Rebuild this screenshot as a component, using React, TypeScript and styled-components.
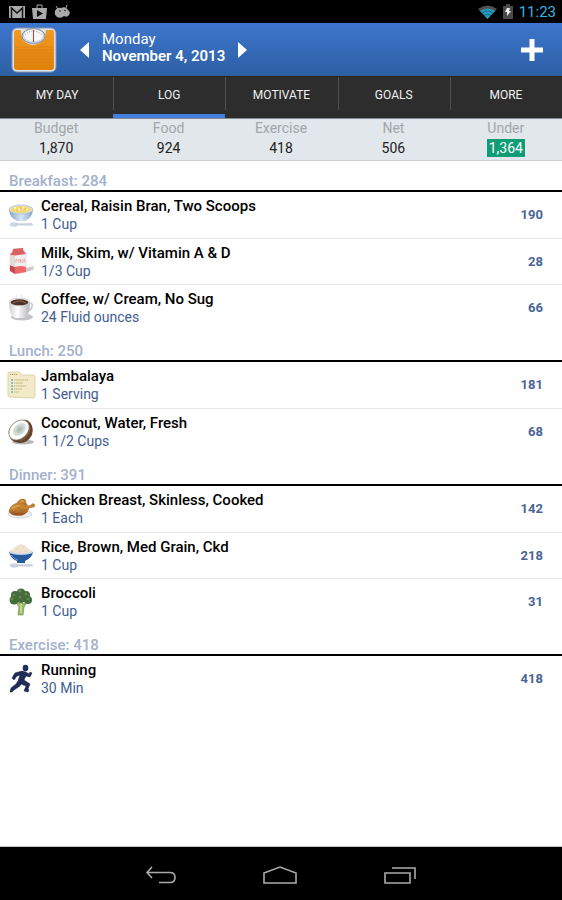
import React, { ReactNode } from 'react';
import styled, { createGlobalStyle } from 'styled-components';

const GlobalStyle = createGlobalStyle`
  * { box-sizing: border-box; }
  body { margin: 0; background: #fff; font-family: Roboto, "Noto Sans", sans-serif; }
  button { font: inherit; color: inherit; background: none; border: 0; padding: 0; cursor: pointer; }
  svg { display: block; flex: none; }
`;

const Screen = styled.div`
  display: flex;
  flex-direction: column;
  min-height: 100vh;
`;

const StatusBar = styled.div`
  display: flex;
  align-items: center;
  justify-content: space-between;
  height: 23px;
  padding: 0 6px 0 9px;
  background: #000;
`;

const StatusGroup = styled.div<{ $gap: number }>`
  display: flex;
  align-items: center;
  gap: ${(p) => p.$gap}px;
`;

const Clock = styled.time`
  color: #33b5e5;
  font-size: 15px;
  line-height: 24px;
`;

const Header = styled.header`
  display: flex;
  align-items: center;
  height: 53px;
  padding: 0 19px 0 11px;
  color: #fff;
  background: linear-gradient(#3c76cd, #2d5fa3);
`;

const DatePicker = styled.div`
  display: flex;
  align-items: center;
  flex: 1;
  gap: 13px;
  margin-left: 23px;
`;

const DateText = styled.h1`
  display: flex;
  flex-direction: column;
  margin: 0 0 4px;
  font-size: 15px;
  line-height: 17px;
  font-weight: 600;
`;

const Weekday = styled.span`
  font-weight: 400;
`;

const Tabs = styled.nav`
  display: grid;
  grid-template-columns: repeat(5, 1fr);
  height: 42px;
  padding-left: 1px;
  background: #2d2d2d;
  border-top: 1px solid #2b2710;
`;

const Tab = styled.button<{ $active?: boolean }>`
  display: flex;
  justify-content: center;
  padding-top: 10px;
  color: #f0f0f0;
  font-size: 12px;
  line-height: 16px;
  border-bottom: 4px solid ${(p) => (p.$active ? '#4080de' : 'transparent')};
  background: linear-gradient(#505050, #505050) left top / 1px 33px no-repeat;
  &:first-child { background: none; }
`;

const Summary = styled.dl`
  display: grid;
  grid-template-columns: repeat(5, 1fr);
  height: 43px;
  margin: 0;
  text-align: center;
  font-size: 14px;
  background: #e2e7eb;
  border-top: 1px solid #85878a;
  border-bottom: 1px solid #c9cccf;
`;

const SummaryLabel = styled.dt`
  color: #a3a6a9;
  line-height: 18px;
`;

const SummaryValue = styled.dd<{ $good?: boolean }>`
  width: fit-content;
  margin: 2px auto 0;
  padding: 0 2px;
  line-height: 18px;
  color: ${(p) => (p.$good ? '#fff' : '#222')};
  background: ${(p) => (p.$good ? '#0f9d76' : 'transparent')};
`;

const Log = styled.main`
  flex: 1;
`;

const MealTitle = styled.h2`
  height: 31px;
  margin: 0;
  padding: 10px 9px 0;
  color: #a3b1cc;
  font-size: 15px;
  line-height: 20px;
  font-weight: 500;
  border-bottom: 2px solid #000;
`;

const Entries = styled.ul`
  margin: 0;
  padding: 0;
  list-style: none;
`;

const Entry = styled.li`
  display: flex;
  align-items: center;
  height: 46px;
  padding: 0 19px 0 6px;
  gap: 5px;
  border-bottom: 1px solid #e6e6e6;
  &:first-child { height: 47px; }
  &:last-child { border-bottom-color: transparent; }
`;

const EntryText = styled.div`
  flex: 1;
  padding-top: 1px;
`;

const EntryName = styled.div`
  color: #000;
  font-size: 15px;
  line-height: 18px;
  font-weight: 500;
`;

const EntryAmount = styled.div`
  color: #3f5d8f;
  font-size: 14px;
  line-height: 19px;
`;

const Calories = styled.div`
  color: #4a6496;
  font-size: 13px;
  line-height: 18px;
  font-weight: 700;
`;

const SystemBar = styled.footer`
  display: flex;
  align-items: center;
  justify-content: center;
  gap: 85px;
  height: 54px;
  padding-top: 2px;
  background: #000;
  border-top: 1px solid #c4c4c4;
`;

const FoodSvg = ({ children }: { children: ReactNode }) => (
  <svg width="30" height="30" viewBox="0 0 30 30" aria-hidden="true">{children}</svg>
);

const Spoon = () => (
  <g fill="#cfd8e5" stroke="#a7b4c6" strokeWidth=".4">
    <ellipse cx="8" cy="24.500" rx="4" ry="1.8" />
    <path d="M11 23.800 26 23.500 27 24.500 25 25.300 11 25Z" />
  </g>
);

const CerealIcon = () => (
  <FoodSvg>
    <defs><linearGradient id="bowl" x2="1"><stop stopColor="#7f9fc2" /><stop offset=".5" stopColor="#d8e7f4" /><stop offset="1" stopColor="#86a5c6" /></linearGradient></defs>
    <Spoon />
    <path d="M3 10Q4 18 11 21H19Q26 18 27 10Z" fill="url(#bowl)" />
    <ellipse cx="15" cy="9.500" rx="12" ry="4.500" fill="#dce8f2" stroke="#8aa3bd" strokeWidth=".5" />
    <ellipse cx="15" cy="9.500" rx="10.5" ry="3.5" fill="#f3d877" />
    <g fill="#fff2b0"><circle cx="9" cy="8" r="1.2" /><circle cx="13" cy="9.5" r="1.3" /><circle cx="17" cy="7.5" r="1.2" /><circle cx="21" cy="9.5" r="1.2" /></g>
    <g fill="#dcb04a"><circle cx="11" cy="10.5" r=".7" /><circle cx="15" cy="8" r=".7" /><circle cx="19" cy="9" r=".7" /></g>
  </FoodSvg>
);

const MilkIcon = () => (
  <FoodSvg>
    <path d="M20 21 28 19 27 23 16 26Z" fill="#cbcbcb" />
    <path d="M4 8 7 2 17 1 20 7V25L9 27 4 24Z" fill="#f2f0ef" stroke="#ccc" strokeWidth=".5" />
    <path d="M7 2 17 1V3L7 4ZM4 8 7 4 9 8.5ZM7 4 17 3 20 7 9 8.5Z" fill="#dc5f62" />
    <path d="M4 18 9 20V27L4 24Z" fill="#c9484c" /><path d="M9 20Q15 18 20 20V25L9 27Z" fill="#ed6967" />
    <path d="M4 8 9 9V20L4 18Z" fill="#dfdcdc" />
    <path d="M10 16V12l1.5 2 1.5-2v4m1.5-4v3.6m1.5-3.8v3.7h1.400m.6-3.700v3.400m1.400-3.400-1.400 1.700 1.400 1.400" fill="none" stroke="#e6999b" strokeWidth=".7" />
  </FoodSvg>
);

const CoffeeIcon = () => (
  <FoodSvg>
    <defs><linearGradient id="cup" x2="1"><stop stopColor="#d0d2d5" /><stop offset=".4" stopColor="#fff" /><stop offset="1" stopColor="#b0b3b8" /></linearGradient></defs>
    <ellipse cx="16" cy="24" rx="11" ry="3.5" fill="#c4c4c4" />
    <path d="M23 10Q28 10 25.500 15 24 18 20 19" fill="none" stroke="#c9cbd0" strokeWidth="1.700" />
    <path d="M3 9Q3 23 9 25H18Q24 23 24 9Z" fill="url(#cup)" />
    <ellipse cx="13.500" cy="9" rx="10.500" ry="4" fill="#e9e9eb" stroke="#bbb" strokeWidth=".4" />
    <ellipse cx="13.500" cy="9.300" rx="9" ry="3" fill="#4d3329" />
    <path d="M7 10Q14 6 20 10" fill="none" stroke="#8f6a52" />
    <path d="M11 6Q9 4 11 2M15 6Q17 4 15 1" stroke="#e5e5e5" fill="none" />
  </FoodSvg>
);

const FolderIcon = () => (
  <FoodSvg>
    <path d="M2 3Q2 2 3 2H13L16 5H27Q29 5 29 7V26Q29 28 27 28L3 27Q2 27 2 25Z" fill="#f3ebc8" stroke="#d3c693" strokeWidth=".7" />
    <path d="M4 4.5h8" stroke="#b9a865" strokeWidth="1.200" strokeDasharray="1.500 .5" />
    <path d="M5 10h2m-2 3h2m-2 3h2m-2 3h2m-2 3h2" stroke="#5cbab2" strokeWidth="1.700" />
    <path d="M8 10h14M8 13h9m-9 3h12m-12 3h8m-8 3h5" stroke="#b9aa73" strokeDasharray="1.500 .6" />
  </FoodSvg>
);

const CoconutIcon = () => (
  <FoodSvg>
    <defs><radialGradient id="coconut"><stop stopColor="#a5b5ac" /><stop offset="1" stopColor="#e4ebe7" /></radialGradient></defs>
    <ellipse cx="17" cy="25" rx="11" ry="2.5" fill="#b7b7b7" />
    <path d="M3 18Q1 12 8 6 15 2 21 3 29 8 26 18 20 29 9 25 4 23 3 18Z" fill="#61432f" />
    <ellipse cx="13" cy="13" rx="11.500" ry="8.500" transform="rotate(-43 13 13)" fill="#fff" stroke="#927c65" strokeWidth=".7" />
    <ellipse cx="13.500" cy="12.500" rx="8" ry="5.5" transform="rotate(-43 13.5 12.5)" fill="url(#coconut)" />
    <path d="M24 11Q23 20 14 24" stroke="#8c6447" fill="none" />
  </FoodSvg>
);

const ChickenIcon = () => (
  <FoodSvg>
    <defs><linearGradient id="roast" x2="0" y2="1"><stop stopColor="#bd7729" /><stop offset=".6" stopColor="#c78735" /><stop offset="1" stopColor="#8e4616" /></linearGradient></defs>
    <ellipse cx="14" cy="20" rx="12" ry="4" fill="#edeeef" stroke="#b9bcc0" strokeWidth=".6" />
    <path d="M3 18Q3 12 11 9 13 5 17 5 20 5 20 9L22 12 25 11Q27 8 29 11L28 13 23 14Q22 19 17 21 7 23 3 18Z" fill="url(#roast)" stroke="#92501e" strokeWidth=".4" />
    <path d="M6 15Q9 11 14 12M14 8Q17 6 18 8" fill="none" stroke="#dca054" strokeWidth="1.500" />
    <path d="M12 13Q15 18 21 15M18 9l2 3" stroke="#9a5722" strokeWidth=".7" fill="none" />
  </FoodSvg>
);

const RiceIcon = () => (
  <FoodSvg>
    <Spoon />
    <path d="M3 11Q5 18 11 20V22H19V20Q26 17 27 11Z" fill="#27599d" />
    <ellipse cx="15" cy="11" rx="12" ry="3" fill="#bad1e7" />
    <path d="M4 11Q10 4 15 3 21 5 26 11 16 14 4 11Z" fill="#eee3d1" />
    <path d="M5 14Q8 18 12 19" stroke="#739fcf" fill="none" />
    <g fill="#dfcdb5"><circle cx="11" cy="8" r=".7" /><circle cx="17" cy="6" r=".7" /><circle cx="20" cy="10" r=".7" /><circle cx="14" cy="11" r=".7" /></g>
  </FoodSvg>
);

const BroccoliIcon = () => (
  <FoodSvg>
    <path d="M9 14 13 20 12 28H17L18 20 22 14 17 17 14 11 13 16Z" fill="#9dbc67" stroke="#658440" strokeWidth=".6" />
    <g fill="#446c3b"><circle cx="8" cy="13" r="4.500" /><circle cx="9" cy="8" r="4" /><circle cx="15" cy="6" r="4.500" /><circle cx="20" cy="8" r="4" /><circle cx="22" cy="13" r="4" /><circle cx="15" cy="11" r="5" /></g>
    <g fill="#66894f"><circle cx="8" cy="8" r="1.300" /><circle cx="14" cy="4" r="1.500" /><circle cx="20" cy="7" r="1.300" /><circle cx="6" cy="12" r="1.300" /><circle cx="14" cy="10" r="1.300" /><circle cx="22" cy="12" r="1.300" /></g>
    <path d="M15 17v9" stroke="#d4dfa1" strokeWidth="1.500" />
  </FoodSvg>
);

const RunnerIcon = () => (
  <FoodSvg>
    <ellipse cx="19.500" cy="4" rx="2.800" ry="3.300" fill="#202c58" />
    <path d="M16 7 9 9 6 14 8 16 11 12 14 11 12 17 10 20 5 24 4 28 6 28 8 26 14 22 15 20 20 22 18 27 22 28 23 26 22 25 24 20 18 16 20 12 24 13 26 9 24 8 23 10 20 8Z" fill="#202c58" stroke="#151d3c" strokeWidth=".5" strokeLinejoin="round" />
  </FoodSvg>
);

const ScaleLogo = () => (
  <svg width="46" height="46" viewBox="0 0 46 46" role="img" aria-label="Scale">
    <defs><linearGradient id="scale" y2="1" x2="0"><stop stopColor="#f29a22" /><stop offset="1" stopColor="#e08109" /></linearGradient></defs>
    <rect x="1" y="1" width="44" height="44" rx="5" fill="#dce3eb" stroke="#8294ae" />
    <path d="M5 3H10Q10 17 22 18 34 17 35 3H41Q43 3 43 6V40Q43 43 40 43H6Q3 43 3 40V6Q3 3 5 3Z" fill="url(#scale)" />
    <path d="M4 20H42M4 23H42M4 26H42M4 29H42M4 32H42M4 35H42" stroke="#d77d11" strokeWidth=".6" />
    <ellipse cx="22.5" cy="9" rx="11.5" ry="7.5" fill="#c9d2db" stroke="#8393a5" />
    <ellipse cx="22.5" cy="8.5" rx="9.5" ry="6" fill="#f7f7f5" />
    <path d="M14 8Q22 0 31 8" stroke="#8e969e" strokeDasharray="1 1.5" fill="none" />
    <path d="M22.5 3V15" stroke="#c3383b" />
  </svg>
);

type Item = { icon: ReactNode; name: string; amount: string; calories: number };

const meals: { title: string; total: number; items: Item[] }[] = [
  { title: 'Breakfast', total: 284, items: [
    { icon: <CerealIcon />, name: 'Cereal, Raisin Bran, Two Scoops', amount: '1 Cup', calories: 190 },
    { icon: <MilkIcon />, name: 'Milk, Skim, w/ Vitamin A & D', amount: '1/3 Cup', calories: 28 },
    { icon: <CoffeeIcon />, name: 'Coffee, w/ Cream, No Sug', amount: '24 Fluid ounces', calories: 66 },
  ] },
  { title: 'Lunch', total: 250, items: [
    { icon: <FolderIcon />, name: 'Jambalaya', amount: '1 Serving', calories: 181 },
    { icon: <CoconutIcon />, name: 'Coconut, Water, Fresh', amount: '1 1/2 Cups', calories: 68 },
  ] },
  { title: 'Dinner', total: 391, items: [
    { icon: <ChickenIcon />, name: 'Chicken Breast, Skinless, Cooked', amount: '1 Each', calories: 142 },
    { icon: <RiceIcon />, name: 'Rice, Brown, Med Grain, Ckd', amount: '1 Cup', calories: 218 },
    { icon: <BroccoliIcon />, name: 'Broccoli', amount: '1 Cup', calories: 31 },
  ] },
  { title: 'Exercise', total: 418, items: [
    { icon: <RunnerIcon />, name: 'Running', amount: '30 Min', calories: 418 },
  ] },
];

const totals = [
  ['Budget', '1,870'], ['Food', '924'], ['Exercise', '418'], ['Net', '506'], ['Under', '1,364'],
];

export default function App() {
  return (
    <Screen>
      <GlobalStyle />
      <StatusBar>
        <StatusGroup $gap={7}>
          <svg width="16" height="12" viewBox="0 0 16 12"><path d="M0 0H16V12H0Z" fill="#aaa" /><path d="M2.500 12V2L8 7 13.500 2V12" fill="none" stroke="#111" strokeWidth="1.500" /></svg>
          <svg width="15" height="16" viewBox="0 0 15 16"><path d="M0 4H15L14 15H1Z" fill="#aaa" /><path d="M5 4V1H10V4" fill="none" stroke="#aaa" /><path d="M5 6 11 9.5 5 13Z" fill="#111" /></svg>
          <svg width="16" height="14" viewBox="0 0 16 14"><path d="M1 6Q3 2 7 3 12 1 14 5 17 7 15 10 13 13 10 11 7 14 3 12 0 10 1 6Z" fill="#aaa" /><path d="M4 4 2 1M12 3 13 0" stroke="#aaa" /><circle cx="6" cy="6" r=".8" fill="#222" /><circle cx="11" cy="5.5" r=".8" fill="#222" /></svg>
        </StatusGroup>
        <StatusGroup $gap={6}>
          <svg width="19" height="14" viewBox="0 0 19 14"><path d="M0 4Q9.500-3 19 4L9.500 14Z" fill="#505050" /><path d="M2 6Q9.500 1 17 6L9.500 14Z" fill="#249ac4" /><path d="M4 8Q9.500 4 15 8M6 10.500Q9.500 8 13 10.500" fill="none" stroke="#115570" strokeWidth=".8" /></svg>
          <svg width="10" height="15" viewBox="0 0 10 15"><path d="M0 2H3V0H7V2H10V15H0Z" fill="#4b4b4b" /><path d="M4 4H7L6 7H8L4 12V8H2Z" fill="#eee" /></svg>
          <Clock>11:23</Clock>
        </StatusGroup>
      </StatusBar>
      <Header>
        <ScaleLogo />
        <DatePicker>
          <button aria-label="Previous day"><svg width="9" height="16" viewBox="0 0 9 16"><path d="M9 0V16L0 8Z" fill="#fff" /></svg></button>
          <DateText><Weekday>Monday</Weekday><span>November 4, 2013</span></DateText>
          <button aria-label="Next day"><svg width="9" height="16" viewBox="0 0 9 16"><path d="M0 0V16L9 8Z" fill="#fff" /></svg></button>
        </DatePicker>
        <button aria-label="Add entry"><svg width="22" height="22" viewBox="0 0 22 22"><path d="M8.500 0H13.500V8.500H22V13.500H13.500V22H8.500V13.500H0V8.500H8.500Z" fill="#fff" /></svg></button>
      </Header>
      <Tabs>
        {['MY DAY', 'LOG', 'MOTIVATE', 'GOALS', 'MORE'].map((t) => (
          <Tab key={t} $active={t === 'LOG'} aria-current={t === 'LOG' ? 'page' : undefined}>{t}</Tab>
        ))}
      </Tabs>
      <Summary>
        {totals.map(([label, value]) => (
          <div key={label}>
            <SummaryLabel>{label}</SummaryLabel>
            <SummaryValue $good={label === 'Under'}>{value}</SummaryValue>
          </div>
        ))}
      </Summary>
      <Log>
        {meals.map((meal) => (
          <section key={meal.title}>
            <MealTitle>{meal.title}: {meal.total}</MealTitle>
            <Entries>
              {meal.items.map((item) => (
                <Entry key={item.name}>
                  {item.icon}
                  <EntryText>
                    <EntryName>{item.name}</EntryName>
                    <EntryAmount>{item.amount}</EntryAmount>
                  </EntryText>
                  <Calories>{item.calories}</Calories>
                </Entry>
              ))}
            </Entries>
          </section>
        ))}
      </Log>
      <SystemBar>
        <button aria-label="Back"><svg width="32" height="18" viewBox="0 0 32 18" fill="none" stroke="#aaa" strokeWidth="1.600"><path d="M7 1 2 6.500 7 12M2 6.500H25Q30 6.500 30 11.500T25 16.500H14" /></svg></button>
        <button aria-label="Home"><svg width="36" height="20" viewBox="0 0 36 20" fill="none" stroke="#aaa" strokeWidth="1.600"><path d="M2 8 18 2 34 8V18H2Z" /></svg></button>
        <button aria-label="Recent apps"><svg width="34" height="18" viewBox="0 0 34 18" fill="none" stroke="#aaa" strokeWidth="1.600"><path d="M2 7H27V17H2ZM9 2H32V13" /></svg></button>
      </SystemBar>
    </Screen>
  );
}
